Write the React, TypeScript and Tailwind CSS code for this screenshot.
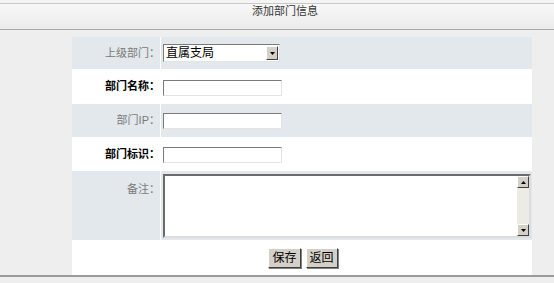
import React from 'react';

const font = { fontFamily: '"Liberation Sans", "Noto Sans CJK SC", sans-serif' };

const Arrow = ({ up, size }: { up?: boolean; size: string }) => (
  <div
    className={`${size} bg-[#d4d0c8] border border-t-white border-l-white border-b-[#404040] border-r-[#404040] flex items-center justify-center`}
  >
    <svg width="5" height="3" viewBox="0 0 5 3">
      <path d={up ? 'M0 3 L2.5 0 L5 3 Z' : 'M0 0 L5 0 L2.5 3 Z'} fill="#000" />
    </svg>
  </div>
);

const Label = ({ text, bold }: { text: string; bold?: boolean }) => (
  <div
    className={`w-[88px] shrink-0 text-right text-[11px] ${
      bold ? 'font-bold text-black' : 'text-[#7a7a7a]'
    }`}
  >
    {text}
  </div>
);

const TextBox = () => (
  <input
    type="text"
    className="w-[119px] h-[16px] bg-white border border-t-[#7b7b7b] border-l-[#7b7b7b] border-b-[#e4e4e4] border-r-[#e4e4e4] outline-none"
  />
);

const Btn = ({ text }: { text: string }) => (
  <button className="h-[20px] px-[3px] bg-[#d4d0c8] text-[12px] text-black border border-t-white border-l-white border-b-[#404040] border-r-[#404040] shadow-[1px_1px_0_#808080] leading-none">
    {text}
  </button>
);

export default function App() {
  return (
    <div className="w-[554px] h-[283px] bg-[#eeeeee] overflow-hidden" style={font}>
      <div className="h-[3px] bg-[#f4f4f4]" />
      <div className="h-[27px] bg-gradient-to-b from-[#f8f8f8] to-[#ebebeb] border-t border-b border-t-[#c8c8c8] border-b-[#a9a9a9] flex items-center pl-[16px] justify-center">
        <span className="text-[11px] text-[#333] -mt-[10px]">添加部门信息</span>
      </div>

      <div className="ml-[72px] w-[460px] mt-[7px] flex flex-col bg-white gap-px">
        <div className="h-[32px] flex items-center bg-[#e2e8eb]">
          <Label text="上级部门：" />
          <div className="self-stretch w-px bg-white" />
          <div className="pl-[2px]">
            <div className="w-[117px] h-[18px] flex items-center bg-white border border-t-[#7b7b7b] border-l-[#7b7b7b] border-b-[#e4e4e4] border-r-[#e4e4e4] pr-px">
              <div className="flex-1 text-[12px] leading-[16px] pl-[2px] text-black">直属支局</div>
              <Arrow size="w-[12px] h-[14px]" />
            </div>
          </div>
        </div>

        <div className="h-[33px] flex items-center bg-white">
          <Label text="部门名称：" bold />
          <div className="self-stretch w-px bg-white" />
          <div className="pl-[2px] pt-[2px]">
            <TextBox />
          </div>
        </div>

        <div className="h-[33px] flex items-center bg-[#e2e8eb]">
          <Label text="部门IP：" />
          <div className="self-stretch w-px bg-white" />
          <div className="pl-[2px] pt-[1px]">
            <TextBox />
          </div>
        </div>

        <div className="h-[32px] flex items-center bg-white">
          <Label text="部门标识：" bold />
          <div className="self-stretch w-px bg-white" />
          <div className="pl-[2px] pt-[1px]">
            <TextBox />
          </div>
        </div>

        <div className="h-[69px] flex bg-[#e2e8eb]">
          <div className="pt-[10px]">
            <Label text="备注：" />
          </div>
          <div className="self-stretch w-px bg-white" />
          <div className="pl-[2px] pt-[3px]">
            <div className="w-[368px] h-[64px] flex bg-white border-2 border-t-[#6b6b6b] border-l-[#6b6b6b] border-b-[#dcdcdc] border-r-[#dcdcdc]">
              <textarea className="flex-1 resize-none outline-none bg-white" />
              <div className="w-[12px] flex flex-col justify-between bg-[#ecebe6]">
                <Arrow up size="w-[12px] h-[12px]" />
                <Arrow size="w-[12px] h-[12px]" />
              </div>
            </div>
          </div>
        </div>

        <div className="h-[34px] flex items-center justify-center gap-[5px] bg-white pl-[2px]">
          <Btn text="保存" />
          <Btn text="返回" />
        </div>
      </div>
      <div className="h-[2px] bg-[#9a9a9a]" />
    </div>
  );
}
